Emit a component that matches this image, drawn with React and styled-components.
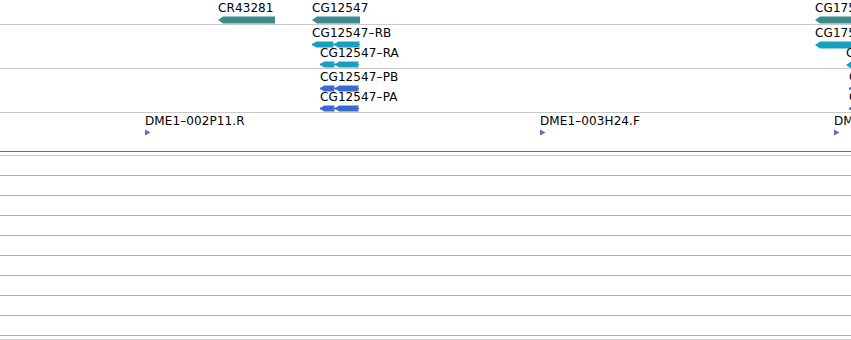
import styled, { createGlobalStyle } from "styled-components";

const Global = createGlobalStyle`
  html, body {
    margin: 0;
    padding: 0;
    background: #fff;
  }
  body {
    font-family: "DejaVu Sans", sans-serif;
    font-size: 12px;
    color: #000;
    overflow: hidden;
  }
`;

const Page = styled.div`
  width: 851px;
  height: 340px;
  overflow: hidden;
  display: flex;
  flex-direction: column;
`;

const Track = styled.div`
  position: relative;
  height: ${(p) => p.h}px;
  border-bottom: 1px solid ${(p) => p.line || "#c9c9c9"};
  overflow: hidden;
  flex-shrink: 0;
`;

const Gap = styled.div`
  height: 3px;
  border-bottom: 1px solid #c9c9c9;
  flex-shrink: 0;
`;

const GridRow = styled.div`
  height: 19px;
  border-bottom: 1px solid #8fb7d6;
  flex-shrink: 0;
`;

const Feature = styled.div`
  position: absolute;
  left: ${(p) => p.x}px;
  top: ${(p) => p.y}px;
  display: flex;
  flex-direction: column;
  align-items: flex-start;
`;

const Label = styled.span`
  font-size: 12px;
  line-height: 14px;
  white-space: nowrap;
  letter-spacing: 0.1px;
`;

const Glyph = styled.svg`
  display: block;
  margin-top: ${(p) => p.mt || 0}px;
`;

const GeneBar = ({ w, color }) => (
  <Glyph width={w} height={8} mt={1}>
    <polygon points={`0,4 5,0.5 ${w},0.5 ${w},7.5 5,7.5`} fill={color} />
  </Glyph>
);

const Exons = ({ parts, color }) => {
  const w = parts[parts.length - 1][1];
  return (
    <Glyph width={w} height={7} mt={1}>
      <rect x={parts[0][0]} y={2.5} width={w - parts[0][0]} height={2} fill={color} />
      {parts.map(([a, b], i) => (
        <polygon
          key={i}
          points={`${a},3.5 ${a + 4},0.5 ${b},0.5 ${b - 2},3.5 ${b},6.5 ${a + 4},6.5`}
          fill={color}
        />
      ))}
    </Glyph>
  );
};

const Marker = ({ color }) => (
  <Glyph width={6} height={7} mt={1}>
    <polygon points="0,0.5 5.5,3.5 0,6.5" fill={color} />
  </Glyph>
);

const TEAL = "#3c8c8e";
const CYAN = "#16a0bf";
const BLUE = "#3a6ad0";
const PURPLE = "#7c5cc0";

export default function App() {
  return (
    <Page>
      <Global />
      <Track h={24}>
        <Feature x={218} y={1}>
          <Label>CR43281</Label>
          <GeneBar w={57} color={TEAL} />
        </Feature>
        <Feature x={312} y={1}>
          <Label>CG12547</Label>
          <GeneBar w={48} color={TEAL} />
        </Feature>
        <Feature x={815} y={1}>
          <Label>CG17565</Label>
          <GeneBar w={60} color={TEAL} />
        </Feature>
      </Track>

      <Track h={43}>
        <Feature x={312} y={1}>
          <Label>CG12547–RB</Label>
          <Exons parts={[[0, 22], [22, 48]]} color={CYAN} />
        </Feature>
        <Feature x={320} y={21}>
          <Label>CG12547–RA</Label>
          <Exons parts={[[0, 15], [15, 39]]} color={CYAN} />
        </Feature>
        <Feature x={815} y={1}>
          <Label>CG17565–RA</Label>
          <GeneBar w={60} color={CYAN} />
        </Feature>
        <Feature x={846} y={21}>
          <Label>CG17565–RB</Label>
          <GeneBar w={30} color={CYAN} />
        </Feature>
      </Track>

      <Track h={43}>
        <Feature x={320} y={1}>
          <Label>CG12547–PB</Label>
          <Exons parts={[[0, 15], [15, 39]]} color={BLUE} />
        </Feature>
        <Feature x={320} y={21}>
          <Label>CG12547–PA</Label>
          <Exons parts={[[0, 15], [15, 39]]} color={BLUE} />
        </Feature>
        <Feature x={849} y={1}>
          <Label>CG17565–PA</Label>
          <Exons parts={[[0, 10]]} color={BLUE} />
        </Feature>
        <Feature x={849} y={21}>
          <Label>CG17565–PB</Label>
          <Exons parts={[[0, 10]]} color={BLUE} />
        </Feature>
      </Track>

      <Track h={38} line="#6e5ea6">
        <Feature x={145} y={1}>
          <Label>DME1–002P11.R</Label>
          <Marker color={PURPLE} />
        </Feature>
        <Feature x={540} y={1}>
          <Label>DME1–003H24.F</Label>
          <Marker color={PURPLE} />
        </Feature>
        <Feature x={834} y={1}>
          <Label>DME1–004A03.R</Label>
          <Marker color={PURPLE} />
        </Feature>
      </Track>

      <Gap />
      {Array.from({ length: 9 }).map((_, i) => (
        <GridRow key={i} />
      ))}
      <Gap />
    </Page>
  );
}
